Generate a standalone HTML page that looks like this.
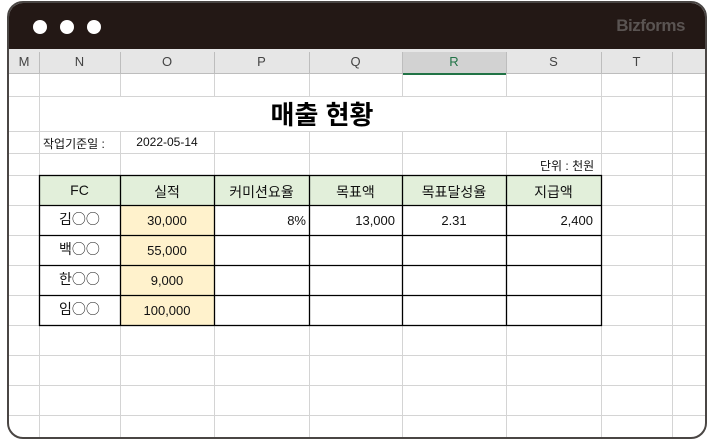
<!DOCTYPE html>
<html><head><meta charset="utf-8"><style>
*{margin:0;padding:0;box-sizing:border-box}
body{width:715px;height:440px;background:#fff;position:relative;overflow:hidden;font-family:"Liberation Sans","Noto Sans CJK KR",sans-serif;color:#111}
#frame{position:absolute;left:7px;top:1px;width:700px;height:438px;border:2px solid #4a4644;border-radius:16px;overflow:hidden;background:#fff}
#bar{position:absolute;left:0;top:0;width:100%;height:46px;background:#231815}
.dot{position:absolute;top:17px;width:14px;height:14px;border-radius:50%;background:#fff}
#logo{position:absolute;right:20px;top:13px;color:#5a5452;font-size:17px;font-weight:bold;letter-spacing:-0.5px}
.a{position:absolute}
.t{position:absolute;font-size:13px;text-align:center;white-space:nowrap}
.k{font-family:"Noto Sans CJK KR",sans-serif;font-size:14px}
</style></head><body>
<div id="frame">
<div id="bar"><div class="dot" style="left:24px"></div><div class="dot" style="left:51px"></div><div class="dot" style="left:78px"></div><div id="logo">Bizforms</div></div>
<div class="a" style="left:0;top:46px;width:700px;height:25px;background:#e6e6e6;border-bottom:1px solid #bdbdbd"></div>
<div class="a" style="left:393px;top:49px;width:104px;height:23px;background:#d2d2d2;border-bottom:2px solid #217346"></div>
<svg class="a" style="left:-9px;top:-3px" width="715" height="440">
<g stroke="#d4d4d4" stroke-width="1">
<line x1="0" y1="96.5" x2="715" y2="96.5"/><line x1="0" y1="131.5" x2="715" y2="131.5"/><line x1="0" y1="153.5" x2="715" y2="153.5"/><line x1="0" y1="175.5" x2="715" y2="175.5"/>
<line x1="0" y1="205.5" x2="715" y2="205.5"/><line x1="0" y1="235.5" x2="715" y2="235.5"/><line x1="0" y1="265.5" x2="715" y2="265.5"/><line x1="0" y1="295.5" x2="715" y2="295.5"/><line x1="0" y1="325.5" x2="715" y2="325.5"/><line x1="0" y1="355.5" x2="715" y2="355.5"/><line x1="0" y1="385.5" x2="715" y2="385.5"/><line x1="0" y1="415.5" x2="715" y2="415.5"/>
<line x1="39.5" y1="74" x2="39.5" y2="440"/><line x1="120.5" y1="74" x2="120.5" y2="96"/><line x1="120.5" y1="131" x2="120.5" y2="440"/>
<line x1="214.5" y1="74" x2="214.5" y2="96"/><line x1="214.5" y1="131" x2="214.5" y2="440"/>
<line x1="309.5" y1="74" x2="309.5" y2="96"/><line x1="309.5" y1="131" x2="309.5" y2="440"/>
<line x1="402.5" y1="74" x2="402.5" y2="96"/><line x1="402.5" y1="131" x2="402.5" y2="440"/>
<line x1="506.5" y1="74" x2="506.5" y2="96"/><line x1="506.5" y1="131" x2="506.5" y2="440"/>
<line x1="601.5" y1="74" x2="601.5" y2="440"/><line x1="672.5" y1="74" x2="672.5" y2="440"/>
</g>
<g stroke="#bdbdbd"><line x1="39.5" y1="52" x2="39.5" y2="74"/><line x1="120.5" y1="52" x2="120.5" y2="74"/><line x1="214.5" y1="52" x2="214.5" y2="74"/><line x1="309.5" y1="52" x2="309.5" y2="74"/><line x1="402.5" y1="52" x2="402.5" y2="74"/><line x1="506.5" y1="52" x2="506.5" y2="74"/><line x1="601.5" y1="52" x2="601.5" y2="74"/><line x1="672.5" y1="52" x2="672.5" y2="74"/></g>
<rect x="40" y="176" width="562" height="29" fill="#e2efda"/>
<rect x="121" y="206" width="93" height="119" fill="#fff2cc"/>
<g stroke="#000" stroke-width="1.3" fill="none">
<rect x="39.5" y="175.5" width="562" height="150"/>
<line x1="39" y1="205.5" x2="602" y2="205.5"/><line x1="39" y1="235.5" x2="602" y2="235.5"/><line x1="39" y1="265.5" x2="602" y2="265.5"/><line x1="39" y1="295.5" x2="602" y2="295.5"/>
<line x1="120.5" y1="175" x2="120.5" y2="326"/><line x1="214.5" y1="175" x2="214.5" y2="326"/><line x1="309.5" y1="175" x2="309.5" y2="326"/><line x1="402.5" y1="175" x2="402.5" y2="326"/><line x1="506.5" y1="175" x2="506.5" y2="326"/>
</g>
</svg>
</div>
<div style="position:absolute;left:0;top:0;width:715px;height:440px">
<div class="t" style="left:9px;top:54px;width:30px;color:#444">M</div>
<div class="t" style="left:39px;top:54px;width:81px;color:#444">N</div>
<div class="t" style="left:120px;top:54px;width:94px;color:#444">O</div>
<div class="t" style="left:214px;top:54px;width:95px;color:#444">P</div>
<div class="t" style="left:309px;top:54px;width:93px;color:#444">Q</div>
<div class="t" style="left:402px;top:54px;width:104px;color:#217346">R</div>
<div class="t" style="left:506px;top:54px;width:95px;color:#444">S</div>
<div class="t" style="left:601px;top:54px;width:71px;color:#444">T</div>
<div class="t" style="left:129px;top:95px;width:386px;font-size:26px;font-weight:bold;color:#000">매출 현황</div>
<div class="t" style="left:43px;top:135px;font-size:12px">작업기준일 :</div>
<div class="t" style="left:120px;top:135px;width:94px;font-size:12px">2022-05-14</div>
<div class="t" style="left:540px;top:157px;font-size:12px">단위 : 천원</div>
<div class="t" style="left:39px;top:182px;width:81px;font-size:14px">FC</div>
<div class="t" style="left:120px;top:182px;width:94px;font-size:14px">실적</div>
<div class="t" style="left:214px;top:182px;width:95px;font-size:14px">커미션요율</div>
<div class="t" style="left:309px;top:182px;width:93px;font-size:14px">목표액</div>
<div class="t" style="left:402px;top:182px;width:104px;font-size:14px">목표달성율</div>
<div class="t" style="left:506px;top:182px;width:95px;font-size:14px">지급액</div>
<div class="t k" style="left:39px;top:209px;width:81px">김○○</div>
<div class="t k" style="left:39px;top:239px;width:81px">백○○</div>
<div class="t k" style="left:39px;top:269px;width:81px">한○○</div>
<div class="t k" style="left:39px;top:299px;width:81px">임○○</div>
<div class="t" style="left:120px;top:213px;width:94px">30,000</div>
<div class="t" style="left:120px;top:243px;width:94px">55,000</div>
<div class="t" style="left:120px;top:273px;width:94px">9,000</div>
<div class="t" style="left:120px;top:303px;width:94px">100,000</div>
<div class="t" style="left:214px;top:213px;width:92px;text-align:right">8%</div>
<div class="t" style="left:309px;top:213px;width:86px;text-align:right">13,000</div>
<div class="t" style="left:402px;top:213px;width:104px">2.31</div>
<div class="t" style="left:506px;top:213px;width:87px;text-align:right">2,400</div>
</div>
</body></html>
